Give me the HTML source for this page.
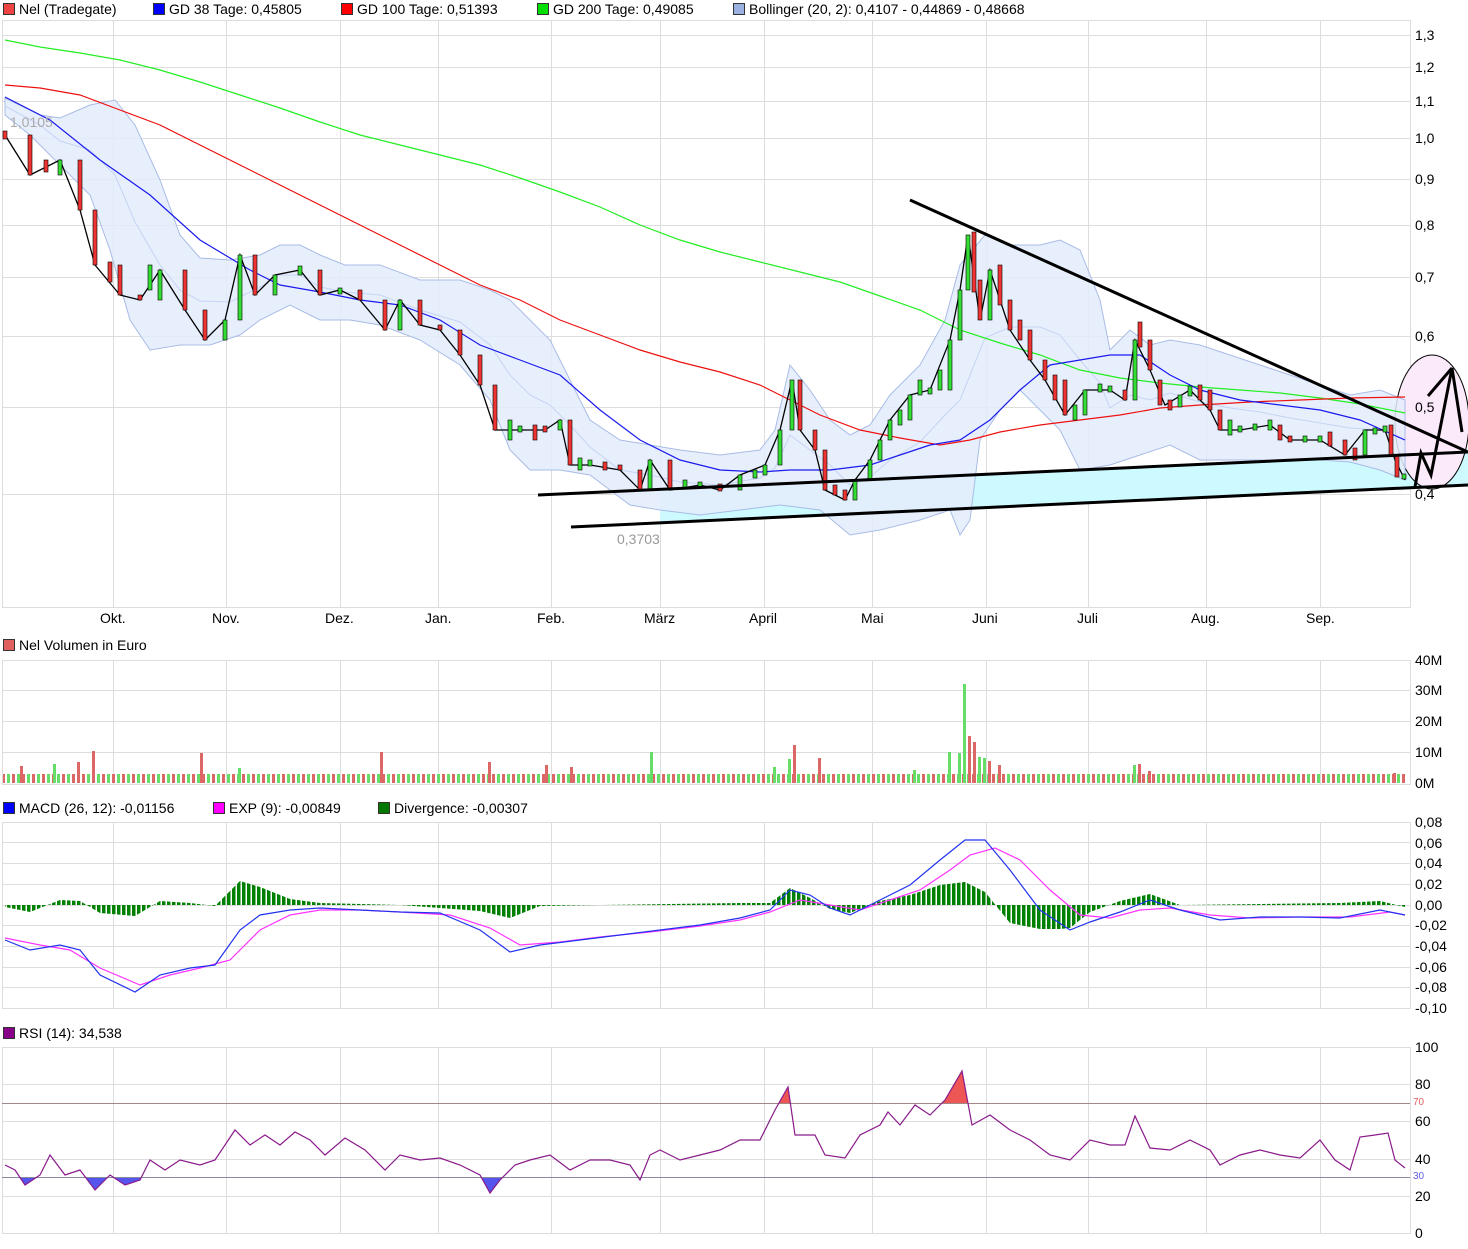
<!DOCTYPE html>
<html><head><meta charset="utf-8"><style>
html,body{margin:0;padding:0;background:#fff;}
body{width:1468px;height:1249px;position:relative;overflow:hidden;font-family:"Liberation Sans",sans-serif;font-size:14px;color:#000;}
.t{position:absolute;white-space:nowrap;line-height:16px;}
.sq{display:inline-block;width:10px;height:10px;border:1px solid #333;vertical-align:-1px;margin-right:4px;}
svg{position:absolute;left:0;top:0;}
.ax{position:absolute;left:1415px;white-space:nowrap;line-height:16px;}
</style></head><body>
<svg width="1468" height="1249" xmlns="http://www.w3.org/2000/svg">
<defs>
<pattern id="vp" x="2" y="0" width="10" height="200" patternUnits="userSpaceOnUse"><rect x="0" y="0" width="3" height="200" fill="#dd6666"/><rect x="5" y="0" width="3" height="200" fill="#66dd66"/></pattern>
<pattern id="hp" x="2" y="0" width="5" height="300" patternUnits="userSpaceOnUse"><rect x="0" y="0" width="3.5" height="300" fill="#008000"/></pattern>
<clipPath id="ca"><rect x="0" y="1040" width="1410" height="63"/></clipPath>
<clipPath id="cb"><rect x="0" y="1177" width="1410" height="60"/></clipPath>
</defs>
<g fill="#fff" stroke="#ddd">
<rect x="2.5" y="20.5" width="1408" height="587"/>
<rect x="2.5" y="660.5" width="1408" height="124"/>
<rect x="2.5" y="822.5" width="1408" height="186"/>
<rect x="2.5" y="1047.5" width="1408" height="186"/>
</g>
<g stroke="#ddd">
<path d="M113.5 20V607M226.5 20V607M340.5 20V607M438.5 20V607M551.5 20V607M660.5 20V607M764.5 20V607M872.5 20V607M986.5 20V607M1088.5 20V607M1206.5 20V607M1320.5 20V607"/>
<path d="M113.5 660V784M226.5 660V784M340.5 660V784M438.5 660V784M551.5 660V784M660.5 660V784M764.5 660V784M872.5 660V784M986.5 660V784M1088.5 660V784M1206.5 660V784M1320.5 660V784"/>
<path d="M113.5 822V1008M226.5 822V1008M340.5 822V1008M438.5 822V1008M551.5 822V1008M660.5 822V1008M764.5 822V1008M872.5 822V1008M986.5 822V1008M1088.5 822V1008M1206.5 822V1008M1320.5 822V1008"/>
<path d="M113.5 1047V1233M226.5 1047V1233M340.5 1047V1233M438.5 1047V1233M551.5 1047V1233M660.5 1047V1233M764.5 1047V1233M872.5 1047V1233M986.5 1047V1233M1088.5 1047V1233M1206.5 1047V1233M1320.5 1047V1233"/>
<path d="M2 35.5H1410M2 67.5H1410M2 101.5H1410M2 138.5H1410M2 179.5H1410M2 225.5H1410M2 277.5H1410M2 336.5H1410M2 407.5H1410M2 494.5H1410"/>
<path d="M2 690.5H1410M2 721.5H1410M2 752.5H1410"/>
<path d="M2 842.5H1410M2 863.5H1410M2 884.5H1410M2 905.5H1410M2 925.5H1410M2 946.5H1410M2 967.5H1410M2 987.5H1410"/>
<path d="M2 1084.5H1410M2 1121.5H1410M2 1159.5H1410M2 1196.5H1410"/>
</g>
<polygon points="660,489.4 1468,452 1468,485 660,522.8" fill="#ccfaff"/>
<ellipse cx="1432" cy="422" rx="37" ry="67" fill="#fbeafa" stroke="#000" stroke-width="1"/>
<polygon fill="#e4ecfb" fill-opacity=".85" stroke="#a8bce6" points="5,98 40,115 60,118 90,105 115,100 135,125 160,180 180,235 200,258 230,260 260,255 280,245 300,245 320,255 345,265 380,265 420,280 460,280 490,290 510,300 530,320 550,340 570,380 590,420 620,440 650,445 680,450 720,455 760,450 775,430 790,365 810,390 830,420 850,435 870,425 890,395 920,365 945,320 960,265 985,235 1010,245 1040,245 1060,240 1080,250 1100,300 1110,350 1130,330 1150,345 1170,340 1200,345 1230,355 1260,365 1290,375 1320,385 1350,395 1380,390 1405,400 1405,480 1380,470 1350,462 1320,460 1290,460 1260,460 1230,460 1200,460 1170,445 1140,455 1110,465 1080,470 1060,430 1040,410 1020,390 1000,410 980,440 970,520 960,535 950,510 920,520 880,530 850,535 820,510 780,505 740,510 700,515 660,510 630,505 590,475 560,470 530,470 510,450 490,400 460,365 420,340 380,325 350,320 320,320 290,305 260,320 240,335 210,345 180,345 150,350 130,320 110,250 90,195 60,165 30,135 5,115"/>
<polyline fill="none" stroke="#c4d4f4" points="5,106 40,125 60,141 90,150 115,175 135,222 160,265 180,290 200,301 230,302 260,287 280,275 300,275 320,287 345,292 380,295 420,310 460,322 490,345 510,375 530,395 550,405 570,425 590,447 620,470 650,475 680,482 720,485 760,478 775,468 790,435 810,450 830,465 850,485 870,477 890,460 920,442 945,415 960,400 985,338 1010,327 1040,327 1060,335 1080,360 1100,383 1110,408 1130,395 1150,400 1170,393 1200,402 1230,408 1260,412 1290,418 1320,423 1350,428 1380,430 1405,440"/>
<polyline fill="none" stroke="#22ee22" stroke-width="1.2" points="5,40 40,47 80,53 120,60 160,70 200,82 240,95 280,108 320,122 360,135 400,145 440,155 480,165 520,178 560,192 600,207 640,225 680,240 720,252 760,262 800,272 840,282 880,296 920,310 960,330 1000,343 1040,355 1080,370 1120,378 1160,383 1200,387 1240,390 1280,393 1320,398 1360,404 1405,413"/>
<polyline fill="none" stroke="#ee1111" stroke-width="1.2" points="5,85 40,88 80,95 120,110 160,125 200,145 240,165 280,185 320,205 360,225 400,245 440,265 480,285 520,300 560,320 600,335 640,350 680,362 720,372 760,385 790,400 820,415 860,430 900,438 940,445 970,440 1000,432 1040,425 1080,420 1120,415 1160,408 1200,405 1250,402 1300,400 1350,398 1405,397"/>
<polyline fill="none" stroke="#1a1aee" stroke-width="1.2" points="5,97 50,120 100,160 150,195 200,240 250,270 280,285 320,292 360,300 400,305 440,320 480,345 520,360 560,375 600,410 640,440 680,460 720,470 760,472 790,470 830,470 870,465 900,455 930,445 960,440 990,420 1020,390 1050,365 1080,360 1110,355 1140,355 1170,375 1200,390 1240,400 1280,405 1320,410 1360,420 1405,440"/>
<polyline fill="none" stroke="#000" stroke-width="1.3" points="5,135 30,175 60,160 80,210 95,265 120,295 140,300 160,270 185,310 205,340 225,320 240,255 255,295 275,275 300,270 320,295 340,290 360,300 385,330 400,300 420,325 440,330 460,355 480,385 495,430 520,430 545,430 560,420 570,465 590,465 620,470 640,490 650,460 670,490 700,485 720,490 740,475 765,465 780,430 792,380 800,430 815,450 825,490 845,500 855,480 870,460 890,420 910,395 930,390 950,340 960,290 968,235 980,320 990,270 1010,330 1030,360 1045,380 1065,415 1085,390 1110,390 1125,400 1135,340 1150,370 1165,405 1190,390 1210,410 1220,430 1240,430 1270,425 1290,440 1320,440 1345,455 1365,430 1385,430 1395,460 1405,480"/>
<g stroke="#000" stroke-width="0.6">
<rect x="3" y="131" width="4" height="8" fill="#ee3333"/><rect x="28" y="135" width="4" height="40" fill="#ee3333"/><rect x="44" y="160" width="4" height="12" fill="#ee3333"/><rect x="58" y="160" width="4" height="15" fill="#33dd33"/><rect x="78" y="160" width="4" height="50" fill="#ee3333"/><rect x="93" y="210" width="4" height="55" fill="#ee3333"/><rect x="108" y="262" width="4" height="20" fill="#ee3333"/><rect x="118" y="265" width="4" height="30" fill="#ee3333"/><rect x="138" y="295" width="4" height="5" fill="#ee3333"/><rect x="148" y="265" width="4" height="25" fill="#33dd33"/><rect x="158" y="270" width="4" height="30" fill="#33dd33"/><rect x="183" y="270" width="4" height="40" fill="#ee3333"/><rect x="203" y="310" width="4" height="30" fill="#ee3333"/><rect x="223" y="320" width="4" height="20" fill="#33dd33"/><rect x="238" y="255" width="4" height="65" fill="#33dd33"/><rect x="253" y="255" width="4" height="40" fill="#ee3333"/><rect x="273" y="275" width="4" height="20" fill="#33dd33"/><rect x="298" y="266" width="4" height="9" fill="#33dd33"/><rect x="318" y="270" width="4" height="25" fill="#ee3333"/><rect x="338" y="288" width="4" height="6" fill="#33dd33"/><rect x="358" y="290" width="4" height="10" fill="#ee3333"/><rect x="383" y="300" width="4" height="30" fill="#ee3333"/><rect x="398" y="300" width="4" height="30" fill="#33dd33"/><rect x="418" y="300" width="4" height="25" fill="#ee3333"/><rect x="438" y="325" width="4" height="5" fill="#ee3333"/><rect x="458" y="330" width="4" height="25" fill="#ee3333"/><rect x="478" y="355" width="4" height="30" fill="#ee3333"/><rect x="493" y="385" width="4" height="45" fill="#ee3333"/><rect x="508" y="420" width="4" height="20" fill="#33dd33"/><rect x="518" y="426" width="4" height="6" fill="#33dd33"/><rect x="533" y="425" width="4" height="15" fill="#ee3333"/><rect x="543" y="426" width="4" height="6" fill="#ee3333"/><rect x="558" y="420" width="4" height="10" fill="#33dd33"/><rect x="568" y="420" width="4" height="45" fill="#ee3333"/><rect x="578" y="458" width="4" height="12" fill="#33dd33"/><rect x="588" y="460" width="4" height="6" fill="#33dd33"/><rect x="603" y="462" width="4" height="8" fill="#ee3333"/><rect x="618" y="465" width="4" height="5" fill="#ee3333"/><rect x="638" y="470" width="4" height="20" fill="#ee3333"/><rect x="648" y="460" width="4" height="30" fill="#33dd33"/><rect x="668" y="460" width="4" height="30" fill="#ee3333"/><rect x="683" y="480" width="4" height="8" fill="#33dd33"/><rect x="698" y="482" width="4" height="6" fill="#33dd33"/><rect x="718" y="484" width="4" height="7" fill="#ee3333"/><rect x="738" y="475" width="4" height="15" fill="#33dd33"/><rect x="753" y="470" width="4" height="8" fill="#33dd33"/><rect x="763" y="465" width="4" height="10" fill="#33dd33"/><rect x="778" y="430" width="4" height="35" fill="#33dd33"/><rect x="790" y="380" width="4" height="50" fill="#33dd33"/><rect x="798" y="380" width="4" height="50" fill="#ee3333"/><rect x="813" y="430" width="4" height="20" fill="#ee3333"/><rect x="823" y="450" width="4" height="40" fill="#ee3333"/><rect x="833" y="485" width="4" height="10" fill="#ee3333"/><rect x="843" y="490" width="4" height="10" fill="#ee3333"/><rect x="853" y="480" width="4" height="20" fill="#33dd33"/><rect x="868" y="460" width="4" height="20" fill="#33dd33"/><rect x="878" y="440" width="4" height="20" fill="#33dd33"/><rect x="888" y="420" width="4" height="20" fill="#33dd33"/><rect x="898" y="410" width="4" height="15" fill="#33dd33"/><rect x="908" y="395" width="4" height="25" fill="#33dd33"/><rect x="918" y="380" width="4" height="15" fill="#33dd33"/><rect x="928" y="388" width="4" height="6" fill="#33dd33"/><rect x="938" y="370" width="4" height="20" fill="#33dd33"/><rect x="948" y="340" width="4" height="50" fill="#33dd33"/><rect x="958" y="290" width="4" height="50" fill="#33dd33"/><rect x="966" y="235" width="4" height="55" fill="#33dd33"/><rect x="972" y="232" width="4" height="60" fill="#ee3333"/><rect x="978" y="280" width="4" height="40" fill="#ee3333"/><rect x="988" y="270" width="4" height="50" fill="#33dd33"/><rect x="998" y="265" width="4" height="40" fill="#ee3333"/><rect x="1008" y="300" width="4" height="30" fill="#ee3333"/><rect x="1018" y="320" width="4" height="20" fill="#ee3333"/><rect x="1028" y="330" width="4" height="30" fill="#ee3333"/><rect x="1043" y="360" width="4" height="20" fill="#ee3333"/><rect x="1053" y="375" width="4" height="25" fill="#ee3333"/><rect x="1063" y="380" width="4" height="35" fill="#ee3333"/><rect x="1073" y="405" width="4" height="15" fill="#33dd33"/><rect x="1083" y="390" width="4" height="25" fill="#33dd33"/><rect x="1098" y="384" width="4" height="8" fill="#33dd33"/><rect x="1108" y="386" width="4" height="6" fill="#33dd33"/><rect x="1123" y="390" width="4" height="10" fill="#ee3333"/><rect x="1133" y="340" width="4" height="60" fill="#33dd33"/><rect x="1138" y="322" width="4" height="25" fill="#ee3333"/><rect x="1148" y="340" width="4" height="30" fill="#ee3333"/><rect x="1158" y="380" width="4" height="25" fill="#ee3333"/><rect x="1168" y="400" width="4" height="10" fill="#ee3333"/><rect x="1178" y="395" width="4" height="12" fill="#33dd33"/><rect x="1188" y="386" width="4" height="10" fill="#33dd33"/><rect x="1198" y="385" width="4" height="15" fill="#ee3333"/><rect x="1208" y="390" width="4" height="20" fill="#ee3333"/><rect x="1218" y="410" width="4" height="20" fill="#ee3333"/><rect x="1228" y="420" width="4" height="15" fill="#33dd33"/><rect x="1238" y="426" width="4" height="6" fill="#33dd33"/><rect x="1253" y="424" width="4" height="6" fill="#33dd33"/><rect x="1268" y="420" width="4" height="10" fill="#33dd33"/><rect x="1278" y="425" width="4" height="15" fill="#ee3333"/><rect x="1288" y="436" width="4" height="6" fill="#ee3333"/><rect x="1303" y="436" width="4" height="6" fill="#33dd33"/><rect x="1318" y="436" width="4" height="6" fill="#33dd33"/><rect x="1328" y="432" width="4" height="14" fill="#ee3333"/><rect x="1343" y="440" width="4" height="15" fill="#ee3333"/><rect x="1353" y="448" width="4" height="12" fill="#ee3333"/><rect x="1363" y="430" width="4" height="25" fill="#33dd33"/><rect x="1373" y="428" width="4" height="6" fill="#33dd33"/><rect x="1383" y="426" width="4" height="6" fill="#33dd33"/><rect x="1389" y="425" width="4" height="30" fill="#ee3333"/><rect x="1395" y="455" width="4" height="22" fill="#ee3333"/><rect x="1402" y="474" width="4" height="5" fill="#33dd33"/>
</g>
<line x1="910" y1="200" x2="1468" y2="452" stroke="#000" stroke-width="3"/>
<line x1="538" y1="495" x2="1468" y2="452" stroke="#000" stroke-width="3"/>
<line x1="571" y1="527" x2="1468" y2="485" stroke="#000" stroke-width="3"/>
<polyline points="1415,487 1421,453 1431,475 1452,368 1462,432" fill="none" stroke="#000" stroke-width="3"/>
<line x1="1428" y1="396" x2="1452" y2="368" stroke="#000" stroke-width="3"/>
<!-- volume -->
<rect x="3" y="774" width="1403" height="9" fill="url(#vp)"/>
<g fill="#dd6666"><rect x="20" y="766" width="3" height="17"/><rect x="77" y="762" width="3" height="21"/><rect x="92" y="751" width="3" height="32"/><rect x="200" y="753" width="3" height="30"/><rect x="380" y="752" width="3" height="31"/><rect x="488" y="762" width="3" height="21"/><rect x="545" y="765" width="3" height="18"/><rect x="570" y="767" width="3" height="16"/><rect x="793" y="745" width="3" height="38"/><rect x="818" y="758" width="3" height="25"/><rect x="968" y="736" width="3" height="47"/><rect x="973" y="742" width="3" height="41"/><rect x="988" y="761" width="3" height="22"/><rect x="998" y="765" width="3" height="18"/><rect x="1138" y="764" width="3" height="19"/><rect x="1148" y="771" width="3" height="12"/><rect x="1393" y="773" width="3" height="10"/></g>
<g fill="#66dd66"><rect x="53" y="764" width="3" height="19"/><rect x="238" y="768" width="3" height="15"/><rect x="650" y="752" width="3" height="31"/><rect x="773" y="767" width="3" height="16"/><rect x="788" y="759" width="3" height="24"/><rect x="948" y="752" width="3" height="31"/><rect x="958" y="753" width="3" height="30"/><rect x="963" y="684" width="3" height="99"/><rect x="978" y="757" width="3" height="26"/><rect x="983" y="758" width="3" height="25"/><rect x="913" y="770" width="3" height="13"/><rect x="1133" y="765" width="3" height="18"/></g>
<!-- MACD -->
<polygon fill="url(#hp)" points="5,907 30,912 60,900 80,901 100,913 135,916 160,901 190,903 215,906 240,881 260,887 290,899 320,903 400,905 480,911 510,918 540,906 600,905 740,903 770,903 790,888 810,898 830,909 850,913 880,901 910,895 940,885 965,882 985,892 1010,923 1040,929 1060,929 1070,928 1090,912 1120,901 1150,894 1180,905 1340,903 1380,901 1405,907 1405,905 5,905"/>
<polyline fill="none" stroke="#ff33ff" stroke-width="1.2" points="5,938 40,945 70,950 100,968 140,985 170,975 200,968 230,960 260,930 290,915 320,910 360,910 400,912 450,915 490,928 520,945 560,942 600,937 650,932 700,926 740,920 770,912 800,900 830,905 860,910 890,900 920,890 950,870 970,855 995,848 1020,860 1050,890 1080,915 1110,918 1140,910 1170,908 1210,915 1250,918 1300,917 1350,917 1390,912 1405,915"/>
<polyline fill="none" stroke="#2233ee" stroke-width="1.2" points="5,940 30,950 60,945 80,950 100,975 135,992 160,975 190,968 215,965 240,930 260,915 290,910 320,908 360,910 400,912 440,913 480,930 510,952 540,945 580,940 620,935 660,930 700,925 740,918 770,910 790,890 810,895 830,908 850,915 880,900 910,885 940,860 965,840 985,840 1010,870 1040,910 1070,930 1090,922 1120,912 1150,900 1180,910 1220,920 1260,917 1300,917 1340,918 1380,910 1405,915"/>
<!-- RSI -->
<polygon fill="#ee5555" clip-path="url(#ca)" points="5,1165 760,1140 775,1110 788,1087 795,1135 930,1115 945,1100 962,1071 972,1125 990,1115 1405,1168 1405,1240 5,1240"/>
<polygon fill="#5555ee" clip-path="url(#cb)" points="5,1165 15,1170 25,1185 40,1175 50,1155 65,1175 80,1170 95,1190 110,1175 125,1185 140,1180 150,1160 470,1170 480,1175 490,1193 500,1180 515,1165 1405,1168 1405,1040 5,1040"/>
<line x1="2" y1="1103.5" x2="1410" y2="1103.5" stroke="#a08888"/>
<line x1="2" y1="1177.5" x2="1410" y2="1177.5" stroke="#8888a0"/>
<polyline fill="none" stroke="#8a1a8a" stroke-width="1.2" points="5,1165 15,1170 25,1185 40,1175 50,1155 65,1175 80,1170 95,1190 110,1175 125,1185 140,1180 150,1160 165,1170 180,1160 200,1165 215,1160 235,1130 250,1145 265,1135 280,1145 295,1132 310,1140 325,1155 345,1138 365,1150 385,1170 400,1155 420,1160 440,1158 460,1165 480,1175 490,1193 500,1180 515,1165 530,1160 550,1155 570,1170 590,1160 610,1160 630,1165 640,1180 650,1155 660,1150 680,1160 700,1155 720,1150 740,1140 760,1140 775,1110 788,1087 795,1135 815,1135 825,1155 845,1158 860,1135 880,1125 888,1112 900,1125 915,1105 930,1115 945,1100 962,1071 972,1125 990,1115 1010,1130 1030,1140 1050,1155 1070,1160 1090,1140 1110,1145 1125,1145 1135,1116 1150,1148 1170,1150 1190,1140 1210,1150 1220,1165 1240,1155 1260,1150 1280,1155 1300,1158 1320,1140 1335,1160 1350,1170 1360,1137 1375,1135 1388,1133 1395,1160 1405,1168"/>
</svg>
<div class="t" style="left:3px;top:1px"><span class="sq" style="background:#e44"></span>Nel (Tradegate)</div>
<div class="t" style="left:153px;top:1px"><span class="sq" style="background:#00f"></span>GD 38 Tage: 0,45805</div>
<div class="t" style="left:341px;top:1px"><span class="sq" style="background:#f00"></span>GD 100 Tage: 0,51393</div>
<div class="t" style="left:537px;top:1px"><span class="sq" style="background:#0d0"></span>GD 200 Tage: 0,49085</div>
<div class="t" style="left:733px;top:1px"><span class="sq" style="background:#9ab0e0"></span>Bollinger (20, 2): 0,4107 - 0,44869 - 0,48668</div>
<div class="t" style="left:3px;top:637px"><span class="sq" style="background:#e06060"></span>Nel Volumen in Euro</div>
<div class="t" style="left:3px;top:800px"><span class="sq" style="background:#00f"></span>MACD (26, 12): -0,01156</div>
<div class="t" style="left:213px;top:800px"><span class="sq" style="background:#f0f"></span>EXP (9): -0,00849</div>
<div class="t" style="left:378px;top:800px"><span class="sq" style="background:#070"></span>Divergence: -0,00307</div>
<div class="t" style="left:3px;top:1025px"><span class="sq" style="background:#808"></span>RSI (14): 34,538</div>
<div class="t" style="left:10px;top:114px;color:#aaa">1,0105</div>
<div class="t" style="left:617px;top:531px;color:#999">0,3703</div>
<div class="t" style="left:100px;top:610px">Okt.</div>
<div class="t" style="left:212px;top:610px">Nov.</div>
<div class="t" style="left:325px;top:610px">Dez.</div>
<div class="t" style="left:425px;top:610px">Jan.</div>
<div class="t" style="left:537px;top:610px">Feb.</div>
<div class="t" style="left:644px;top:610px">März</div>
<div class="t" style="left:749px;top:610px">April</div>
<div class="t" style="left:861px;top:610px">Mai</div>
<div class="t" style="left:972px;top:610px">Juni</div>
<div class="t" style="left:1077px;top:610px">Juli</div>
<div class="t" style="left:1191px;top:610px">Aug.</div>
<div class="t" style="left:1306px;top:610px">Sep.</div>
<div class="ax" style="top:27px">1,3</div><div class="ax" style="top:59px">1,2</div><div class="ax" style="top:93px">1,1</div><div class="ax" style="top:130px">1,0</div><div class="ax" style="top:171px">0,9</div><div class="ax" style="top:217px">0,8</div><div class="ax" style="top:269px">0,7</div><div class="ax" style="top:328px">0,6</div><div class="ax" style="top:399px">0,5</div><div class="ax" style="top:486px">0,4</div>
<div class="ax" style="top:652px">40M</div><div class="ax" style="top:682px">30M</div><div class="ax" style="top:713px">20M</div><div class="ax" style="top:744px">10M</div><div class="ax" style="top:775px">0M</div>
<div class="ax" style="top:814px">0,08</div><div class="ax" style="top:835px">0,06</div><div class="ax" style="top:855px">0,04</div><div class="ax" style="top:876px">0,02</div><div class="ax" style="top:897px">0,00</div><div class="ax" style="top:917px">-0,02</div><div class="ax" style="top:938px">-0,04</div><div class="ax" style="top:959px">-0,06</div><div class="ax" style="top:979px">-0,08</div><div class="ax" style="top:1000px">-0,10</div>
<div class="ax" style="top:1039px">100</div><div class="ax" style="top:1076px">80</div><div class="ax" style="top:1113px">60</div><div class="ax" style="top:1151px">40</div><div class="ax" style="top:1188px">20</div><div class="ax" style="top:1225px">0</div>
<div class="t" style="left:1413px;top:1097px;color:#e06060;font-size:10px;line-height:12px">70</div>
<div class="t" style="left:1413px;top:1171px;color:#6060e0;font-size:10px;line-height:12px">30</div>
</body></html>
